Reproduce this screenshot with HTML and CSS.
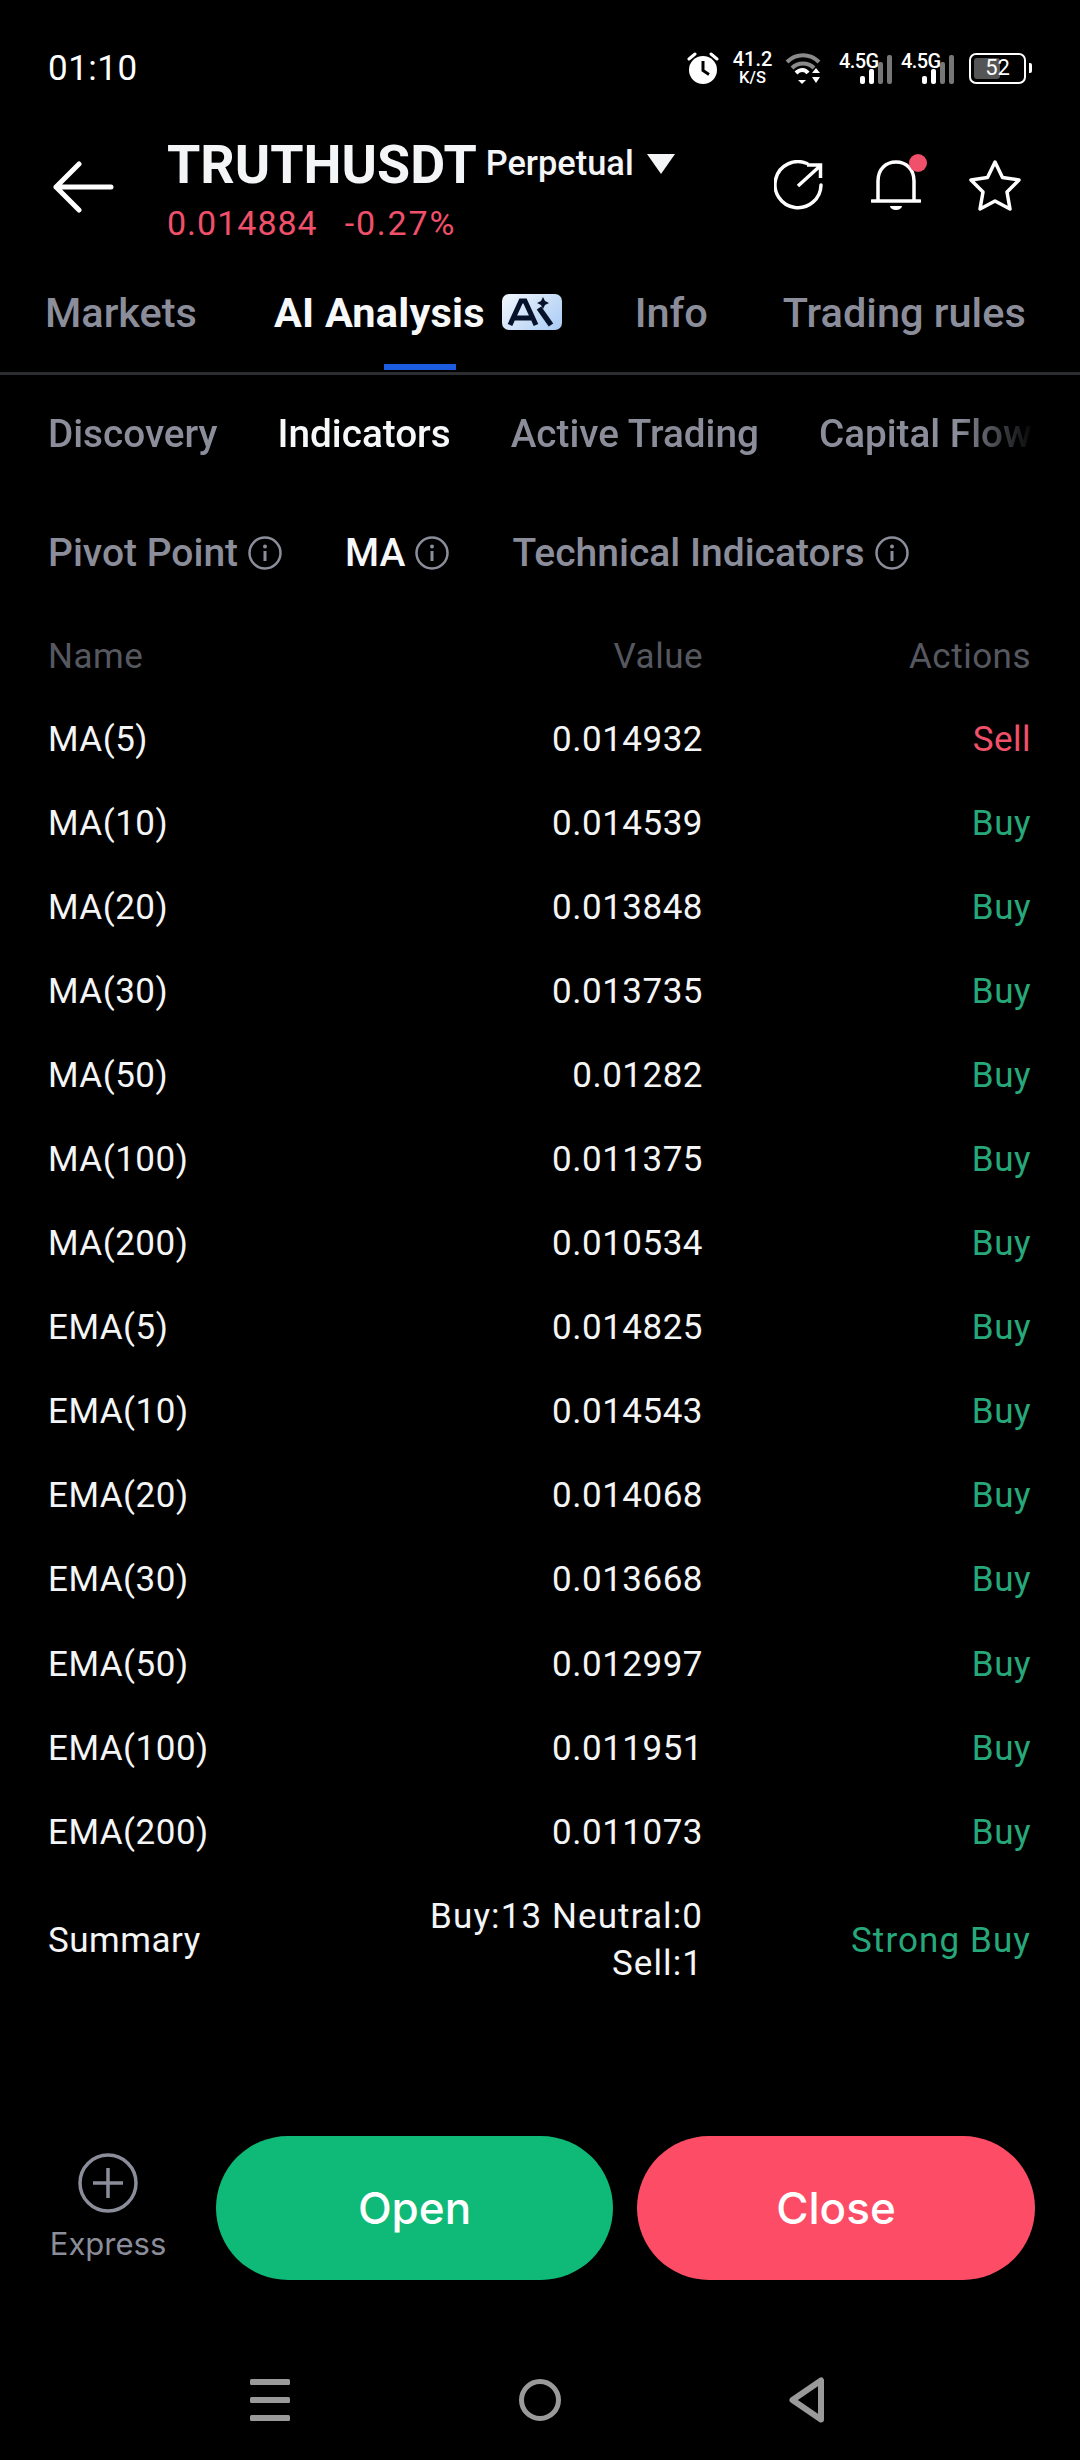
FILE: index.html
```html
<!DOCTYPE html>
<html lang="en">
<head>
<meta charset="utf-8">
<title>TRUTHUSDT</title>
<link rel="stylesheet" href="styles.css">
</head>
<body>
<div class="screen">
  <div class="status">
    <span class="time">01:10</span>
    <div class="status-icons">
      <svg class="ic-alarm" width="32" height="32" viewBox="0 0 32 32"><circle cx="16" cy="18" r="14" fill="#fff"/><path d="M16 9v9.500l6 4" fill="none" stroke="#000" stroke-width="3"/><path d="M2 7l6-5M30 7l-6-5" stroke="#fff" stroke-width="3" stroke-linecap="round"/></svg>
      <div class="speed"><span class="speed-n">41.2</span><span class="speed-u">K/S</span></div>
      <svg class="ic-wifi" width="36" height="31" viewBox="0 0 36 31"><path d="M2 9C11 0 25 0 34 9" fill="none" stroke="#8a8a8a" stroke-width="4"/><path d="M7 15C13 9 23 9 29 15" fill="none" stroke="#8a8a8a" stroke-width="4"/><path d="M11 20c4-4 9-4 12 0" fill="none" stroke="#fff" stroke-width="4"/><path d="M13 27h8l-4 4zM27 20l4-5 4 5zM27 24h8l-4 6z" fill="#fff"/></svg>
      <div class="signal"><span class="sig-t">4.5G</span><svg class="sig-b" width="32" height="29" viewBox="0 0 32 29"><rect x="0" y="21" width="5" height="8" rx="2" fill="#fff"/><rect x="9" y="14" width="5" height="15" rx="2" fill="#fff"/><rect x="18" y="7" width="5" height="22" rx="2" fill="#777"/><rect x="27" y="0" width="5" height="29" rx="2" fill="#777"/></svg></div>
      <div class="signal"><span class="sig-t">4.5G</span><svg class="sig-b" width="32" height="29" viewBox="0 0 32 29"><rect x="0" y="21" width="5" height="8" rx="2" fill="#fff"/><rect x="9" y="14" width="5" height="15" rx="2" fill="#fff"/><rect x="18" y="7" width="5" height="22" rx="2" fill="#777"/><rect x="27" y="0" width="5" height="29" rx="2" fill="#777"/></svg></div>
      <div class="battery"><div class="bat-body"><div class="bat-fill"></div><span class="bat-n">52</span></div><div class="bat-nub"></div></div>
    </div>
  </div>

  <div class="header">
    <svg class="back" width="62" height="52" viewBox="0 0 62 52"><path d="M27 3L4 26l23 23M4 26h55" fill="none" stroke="#fff" stroke-width="5" stroke-linecap="round" stroke-linejoin="round"/></svg>
    <div class="title-block">
      <div class="title-row"><span class="symbol">TRUTHUSDT</span><span class="perp">Perpetual</span><span class="caret"></span></div>
      <div class="price-row"><span class="price">0.014884</span><span class="price price-pct">-0.27%</span></div>
    </div>
    <div class="actions">
      <svg width="50" height="50" viewBox="0 0 50 50"><path d="M33 3.500A23 23 0 1 0 47 25" fill="none" stroke="#fff" stroke-width="3.500" stroke-linecap="round"/><path d="M24 26L46 6M33 5h13.500v13" fill="none" stroke="#fff" stroke-width="3.500"/></svg>
      <div class="bell"><svg width="50" height="50" viewBox="0 0 50 50"><path d="M7 41V21C7 9 15 2 25 2s18 7 18 19v20" fill="none" stroke="#fff" stroke-width="3.500"/><path d="M1 41h48" stroke="#fff" stroke-width="3.500" stroke-linecap="round"/><path d="M19 46h12a6 4 0 0 1-12 0z" fill="#fff"/></svg><span class="bell-dot"></span></div>
      <svg width="54" height="52" viewBox="0 0 54 52"><path d="M27 3l7.500 15.500 16.500 2.500-12 12 3 17-15-8-15 8 3-17L3 21l16.500-2.500z" fill="none" stroke="#fff" stroke-width="3.500" stroke-linejoin="round"/></svg>
    </div>
  </div>

  <div class="tabs">
    <span class="tab tab-first">Markets</span>
    <span class="tab tab-on">AI Analysis<span class="ai-badge"><svg width="60" height="36" viewBox="0 0 60 36"><path d="M8 31L19 7h4l11 24M13 24h16" fill="none" stroke="#06122a" stroke-width="5"/><path d="M37 14l12 17" stroke="#06122a" stroke-width="5.500"/><path d="M41 3l2 4 4 2-4 2-2 4-2-4-4-2 4-2z" fill="#06122a"/></svg></span><span class="tab-bar"></span></span>
    <span class="tab tab-info">Info</span>
    <span class="tab">Trading rules</span>
  </div>

  <div class="subtabs">
    <span class="sub">Discovery</span>
    <span class="sub sub-on">Indicators</span>
    <span class="sub">Active Trading</span>
    <span class="sub">Capital Flow</span>
  </div>

  <div class="filters">
    <span class="filter">Pivot Point<svg class="info" width="34" height="34" viewBox="0 0 34 34"><circle cx="17" cy="17" r="15.500" fill="none" stroke="currentColor" stroke-width="2.500"/><circle cx="17" cy="10.500" r="2" fill="currentColor"/><path d="M17 15v10" stroke="currentColor" stroke-width="3"/></svg></span>
    <span class="filter filter-on">MA<svg class="info" width="34" height="34" viewBox="0 0 34 34"><circle cx="17" cy="17" r="15.500" fill="none" stroke="#8b8e9a" stroke-width="2.500"/><circle cx="17" cy="10.500" r="2" fill="#8b8e9a"/><path d="M17 15v10" stroke="#8b8e9a" stroke-width="3"/></svg></span>
    <span class="filter">Technical Indicators<svg class="info" width="34" height="34" viewBox="0 0 34 34"><circle cx="17" cy="17" r="15.500" fill="none" stroke="currentColor" stroke-width="2.500"/><circle cx="17" cy="10.500" r="2" fill="currentColor"/><path d="M17 15v10" stroke="currentColor" stroke-width="3"/></svg></span>
  </div>

  <div class="table">
    <div class="row row-head"><span>Name</span><span class="val">Value</span><span class="act">Actions</span></div>
    <div class="row"><span>MA(5)</span><span class="val">0.014932</span><span class="act sell">Sell</span></div>
    <div class="row"><span>MA(10)</span><span class="val">0.014539</span><span class="act buy">Buy</span></div>
    <div class="row"><span>MA(20)</span><span class="val">0.013848</span><span class="act buy">Buy</span></div>
    <div class="row"><span>MA(30)</span><span class="val">0.013735</span><span class="act buy">Buy</span></div>
    <div class="row"><span>MA(50)</span><span class="val">0.01282</span><span class="act buy">Buy</span></div>
    <div class="row"><span>MA(100)</span><span class="val">0.011375</span><span class="act buy">Buy</span></div>
    <div class="row"><span>MA(200)</span><span class="val">0.010534</span><span class="act buy">Buy</span></div>
    <div class="row"><span>EMA(5)</span><span class="val">0.014825</span><span class="act buy">Buy</span></div>
    <div class="row"><span>EMA(10)</span><span class="val">0.014543</span><span class="act buy">Buy</span></div>
    <div class="row"><span>EMA(20)</span><span class="val">0.014068</span><span class="act buy">Buy</span></div>
    <div class="row"><span>EMA(30)</span><span class="val">0.013668</span><span class="act buy">Buy</span></div>
    <div class="row"><span>EMA(50)</span><span class="val">0.012997</span><span class="act buy">Buy</span></div>
    <div class="row"><span>EMA(100)</span><span class="val">0.011951</span><span class="act buy">Buy</span></div>
    <div class="row"><span>EMA(200)</span><span class="val">0.011073</span><span class="act buy">Buy</span></div>
    <div class="row row-sum"><span>Summary</span><span class="val">Buy:13 Neutral:0<br>Sell:1</span><span class="act buy">Strong Buy</span></div>
  </div>

  <div class="footer">
    <div class="express">
      <svg width="60" height="60" viewBox="0 0 60 60"><circle cx="30" cy="30" r="28" fill="none" stroke="#8b8e9a" stroke-width="3.500"/><path d="M15 30h30M30 15v30" stroke="#8b8e9a" stroke-width="3.500"/></svg>
      <span class="express-t">Express</span>
    </div>
    <div class="btn btn-open">Open</div>
    <div class="btn btn-close">Close</div>
  </div>

  <div class="nav">
    <svg width="40" height="42" viewBox="0 0 40 42"><rect y="0" width="40" height="6" rx="1.500" fill="#9a9a9a"/><rect y="18" width="40" height="6" rx="1.500" fill="#9a9a9a"/><rect y="36" width="40" height="6" rx="1.500" fill="#9a9a9a"/></svg>
    <svg width="42" height="42" viewBox="0 0 42 42"><circle cx="21" cy="21" r="18.500" fill="none" stroke="#9a9a9a" stroke-width="5"/></svg>
    <svg width="36" height="46" viewBox="0 0 36 46"><path d="M32 3.500v39L3.500 23z" fill="none" stroke="#9a9a9a" stroke-width="6" stroke-linejoin="round"/></svg>
  </div>
</div>
</body>
</html>
```
FILE: styles.css
```css
* { box-sizing: border-box; }
html, body { margin: 0; padding: 0; background: #000; }
.screen { width: 1080px; height: 2460px; background: #000; color: #fff; font-family: Roboto, "Noto Sans", sans-serif; overflow: hidden; display: flex; flex-direction: column; }

.status { height: 136px; flex: none; display: flex; align-items: center; justify-content: space-between; padding: 0 48px; }
.time { font-size: 35px; letter-spacing: 0.5px; }
.status-icons { display: flex; align-items: center; }
.ic-alarm { margin-right: 14px; }
.speed { display: flex; flex-direction: column; align-items: center; width: 39px; margin-right: 13px; font-weight: 500; line-height: 1; }
.speed-n { font-size: 20px; height: 20px; }
.speed-u { font-size: 16.500px; margin-top: 1px; }
.ic-wifi { margin-right: 18px; }
.signal { position: relative; width: 53px; height: 32px; margin-right: 9px; }
.signal + .signal { margin-right: 15px; }
.sig-t { position: absolute; left: 0; top: -1px; font-weight: 500; font-size: 20px; line-height: 20px; letter-spacing: -0.6px; }
.sig-b { position: absolute; right: 0; bottom: 0; }
.battery { display: flex; align-items: center; gap: 3px; }
.bat-body { position: relative; width: 57px; height: 31px; border: 2.5px solid #fff; border-radius: 7px; display: flex; align-items: center; justify-content: center; }
.bat-fill { position: absolute; left: 3px; top: 3px; bottom: 3px; width: 26px; background: #555; border-radius: 3px; }
.bat-n { position: relative; font-size: 22px; line-height: 1; }
.bat-nub { width: 3px; height: 10px; background: #fff; border-radius: 0 2px 2px 0; }

.header { height: 124px; flex: none; display: flex; align-items: flex-start; padding-left: 52px; }
.back { margin-top: 25px; flex: none; }
.title-block { margin-left: 53px; display: flex; flex-direction: column; }
.title-row { display: flex; align-items: center; height: 62px; margin-top: -3px; }
.symbol { font-size: 53.800px; font-weight: 700; color: #f4f5f6; }
.perp { font-size: 34.400px; margin-left: 9px; margin-top: -2px; font-weight: 500; color: #f4f5f6; }
.caret { width: 0; height: 0; margin: -1px 0 0 13px; border-left: 14px solid transparent; border-right: 14px solid transparent; border-top: 20px solid #f4f5f6; }
.price-row { display: flex; gap: 27px; margin-top: 8px; }
.price { font-size: 34px; color: #f0506a; line-height: 40px; letter-spacing: 1px; }
.price-pct { letter-spacing: 1.800px; }
.actions { margin-left: auto; display: flex; align-items: center; gap: 47px; padding-right: 58px; margin-top: 23px; }
.bell { position: relative; height: 50px; }
.bell-dot { position: absolute; right: -6px; top: -6px; width: 18px; height: 18px; border-radius: 50%; background: #f0506a; }

.tabs { height: 115px; flex: none; display: flex; align-items: center; padding: 0 0 8px 45px; border-bottom: 3px solid #2b2d31; font-size: 41.500px; color: #8b8e9a; font-weight: 500; }
.tab { position: relative; margin-right: 80px; white-space: nowrap; }
.tab-first { margin-right: 77px; }
.tab-info { margin-right: 75px; }
.tab-on { color: #f7f8f9; font-weight: 700; letter-spacing: 0.2px; display: flex; align-items: center; margin-right: 73px; }
.ai-badge { margin-left: 17px; width: 60px; height: 36px; border-radius: 7px; background: linear-gradient(135deg, #f2f7fd, #a9cbf4); display: block; }
.ai-badge svg { display: block; }
.tab-bar { position: absolute; left: 110px; bottom: -33px; width: 72px; height: 6px; background: #1b5ce0; }

.subtabs { height: 116px; flex: none; display: flex; align-items: center; padding-left: 48px; gap: 60px; font-size: 38.700px; font-weight: 500; color: #8b8e9a; white-space: nowrap; width: 1035px; overflow: hidden; -webkit-mask-image: linear-gradient(to right, #000 960px, transparent 1035px); mask-image: linear-gradient(to right, #000 960px, transparent 1035px); }
.sub-on { color: #f7f8f9; }

.filters { height: 122px; flex: none; display: flex; align-items: center; padding: 2px 0 0 48px; gap: 63px; font-size: 39px; font-weight: 500; color: #8b8e9a; }
.filter { display: flex; align-items: center; gap: 10px; white-space: nowrap; }
.filter-on { color: #f7f8f9; }
.info { flex: none; }

.table { padding: 0 49px 0 48px; margin-top: 2px; flex: none; }
.row { height: 84.1px; display: grid; grid-template-columns: 1fr 380px 328px; align-items: center; font-size: 35px; color: #f4f5f6; letter-spacing: 0.5px; }
.val { text-align: right; }
.act { text-align: right; }
.buy { color: #27a87a; }
.sell { color: #f0506a; }
.row-head { color: #565860; height: 82px; }
.row-sum { height: 94px; margin-top: 19px; line-height: 47px; }
.row-sum .val, .row-sum .act { letter-spacing: 1.100px; }

.footer { margin-top: auto; flex: none; display: flex; align-items: center; padding-right: 45px; font-family: Inter, sans-serif; }
.express { width: 216px; display: flex; flex-direction: column; align-items: center; font-size: 31px; color: #8b8e9a; }
.express svg { display: block; }
.express-t { margin-top: 11px; line-height: 40px; }
.btn { height: 144px; border-radius: 72px; display: flex; align-items: center; justify-content: center; font-size: 44px; font-weight: 500; color: #fff; }
.btn-open { width: 397px; background: #0fb977; margin-right: 24px; }
.btn-close { width: 398px; background: #fd4c66; }

.nav { height: 180px; flex: none; padding: 97px 255px 37px 250px; display: flex; align-items: center; justify-content: space-between; }
```
